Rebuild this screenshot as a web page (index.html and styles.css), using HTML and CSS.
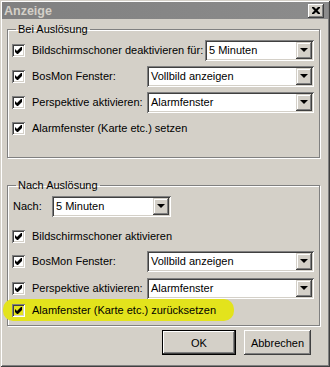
FILE: index.html
```html
<!DOCTYPE html>
<html>

<head>
    <meta http-equiv="content-type" content="text/html; charset=UTF-8">
    <title>Anzeige</title>
    <link rel="stylesheet" href="styles.css">
</head>

<body>
    <div class="window">
        <div class="titlebar">
            <span class="title">Anzeige</span>
            <span class="close">
                <svg width="8" height="7" viewBox="0 0 8 7">
                    <path d="M0 0h2l2 2 2-2h2v1l-2.5 2.5 2.5 2.5v1h-2l-2-2-2 2h-2v-1l2.5-2.5-2.5-2.5z" fill="#000"/>
                </svg>
            </span>
        </div>

        <div class="content">
            <fieldset class="group group-before">
                <legend>Bei Auslösung</legend>
                <div class="row">
                    <span class="box"></span>
                    <span class="caption">Bildschirmschoner deaktivieren für:</span>
                    <div class="combo combo-short"><span class="value">5 Minuten</span><span class="drop"></span></div>
                </div>
                <div class="row">
                    <span class="box"></span>
                    <span class="caption">BosMon Fenster:</span>
                    <div class="combo combo-wide"><span class="value">Vollbild anzeigen</span><span class="drop"></span></div>
                </div>
                <div class="row">
                    <span class="box"></span>
                    <span class="caption">Perspektive aktivieren:</span>
                    <div class="combo combo-wide"><span class="value">Alarmfenster</span><span class="drop"></span></div>
                </div>
                <div class="row">
                    <span class="box"></span>
                    <span class="caption">Alarmfenster (Karte etc.) setzen</span>
                </div>
            </fieldset>

            <fieldset class="group group-after">
                <legend>Nach Auslösung</legend>
                <div class="row row-nach">
                    <span class="caption">Nach:</span>
                    <div class="combo combo-nach"><span class="value">5 Minuten</span><span class="drop"></span></div>
                </div>
                <div class="row row-saver">
                    <span class="box"></span>
                    <span class="caption">Bildschirmschoner aktivieren</span>
                </div>
                <div class="row row-bosmon">
                    <span class="box"></span>
                    <span class="caption">BosMon Fenster:</span>
                    <div class="combo combo-wide"><span class="value">Vollbild anzeigen</span><span class="drop"></span></div>
                </div>
                <div class="row row-persp">
                    <span class="box"></span>
                    <span class="caption">Perspektive aktivieren:</span>
                    <div class="combo combo-wide"><span class="value">Alarmfenster</span><span class="drop"></span></div>
                </div>
                <div class="row marked">
                    <span class="box"></span>
                    <span class="caption">Alamfenster (Karte etc.) zurücksetzen</span>
                </div>
            </fieldset>

            <div class="buttons">
                <button class="btn btn-default">OK</button>
                <button class="btn btn-cancel">Abbrechen</button>
            </div>
        </div>
    </div>
</body>

</html>
```

FILE: styles.css
```css
body {
    margin: 0;
    font-family: "Liberation Sans", Arial, sans-serif;
    font-size: 11px;
    color: #000;
}

.window {
    width: 330px;
    height: 367px;
    box-sizing: border-box;
    background-color: #d4d0c8;
    box-shadow: inset 1px 1px #d4d0c8, inset -1px -1px #404040, inset 2px 2px #fff, inset -2px -2px #808080;
    padding-top: 2px;
}

.titlebar {
    height: 17px;
    margin: 0 2px;
    background: linear-gradient(to right, #808080, #8c8c8c);
    display: flex;
    align-items: center;
    justify-content: space-between;
}

.title {
    color: #d4d0c8;
    font-weight: bold;
    font-size: 12.5px;
    padding-left: 2px;
}

.close {
    width: 16px;
    height: 14px;
    margin-right: 4px;
    box-sizing: border-box;
    background-color: #d4d0c8;
    box-shadow: inset -1px -1px #404040, inset 1px 1px #fff, inset -2px -2px #808080;
    display: flex;
    align-items: center;
    justify-content: center;
}

.content {
    padding: 3px 10px 0 7px;
}

.group {
    margin: 0;
    padding: 1px 5px 16px 4px;
    border: 1px solid #808080;
    box-shadow: 1px 1px 0 #fff, inset 1px 1px 0 #fff;
}

.group legend {
    padding: 0 2px;
    margin-left: 4px;
    line-height: 14px;
}

.group-after {
    margin-top: 20px;
    padding-bottom: 4px;
}

.row {
    height: 26px;
    display: flex;
    align-items: center;
}

.box {
    flex: none;
    width: 13px;
    height: 13px;
    box-sizing: border-box;
    background-color: #fff;
    box-shadow: inset 1px 1px #808080, inset -1px -1px #fff, inset 2px 2px #404040, inset -2px -2px #d4d0c8;
    margin-right: 7px;
    background-image: url("data:image/svg+xml,%3Csvg xmlns='http://www.w3.org/2000/svg' width='7' height='7'%3E%3Cpath d='M0 2l2 2 4-4h1v3l-4 4h-1l-2-2z' fill='%23000'/%3E%3C/svg%3E");
    background-repeat: no-repeat;
    background-position: 3px 3px;
}

.caption {
    white-space: nowrap;
}

.combo {
    margin-left: auto;
    height: 21px;
    box-sizing: border-box;
    padding: 2px;
    background-color: #fff;
    box-shadow: inset 1px 1px #808080, inset -1px -1px #fff, inset 2px 2px #404040, inset -2px -2px #d4d0c8;
    display: flex;
    align-items: center;
}

.combo .value {
    flex: 1;
    padding-left: 2px;
    white-space: nowrap;
}

.combo .drop {
    width: 16px;
    height: 17px;
    box-sizing: border-box;
    background-color: #d4d0c8;
    box-shadow: inset -1px -1px #404040, inset 1px 1px #d4d0c8, inset -2px -2px #808080, inset 2px 2px #fff;
    display: flex;
    align-items: center;
    justify-content: center;
}

.combo .drop::after {
    content: "";
    border-left: 4px solid transparent;
    border-right: 4px solid transparent;
    border-top: 4px solid #000;
}

.combo-short {
    width: 109px;
}

.combo-wide {
    width: 167px;
}

.row-nach {
    height: 22px;
    margin-top: 2px;
}

.row-nach .caption {
    padding-left: 1px;
    width: 39px;
}

.combo-nach {
    margin-left: 0;
    width: 119px;
}

.row-saver {
    height: 22px;
    margin-top: 8px;
}

.row-bosmon {
    height: 22px;
    margin-top: 3px;
}

.row-persp {
    height: 22px;
    margin-top: 5px;
}

.marked {
    height: 22px;
    width: fit-content;
    margin-left: -9px;
    padding: 0 18px 0 9px;
    border-radius: 10px;
    background-color: #e3e31c;
}

.marked .box {
    background-color: #e3e31c;
}

.buttons {
    display: flex;
    justify-content: flex-end;
    gap: 8px;
    margin-top: 4px;
    padding-right: 9px;
}

.btn {
    height: 25px;
    font-family: inherit;
    font-size: 11px;
    color: #000;
    border: none;
    background-color: #d4d0c8;
    box-shadow: inset -1px -1px #404040, inset 1px 1px #fff, inset -2px -2px #808080, inset 2px 2px #d4d0c8;
}

.btn-default {
    width: 74px;
    box-shadow: inset 0 0 0 1px #000, inset -2px -2px #404040, inset 2px 2px #fff, inset -3px -3px #808080;
}

.btn-cancel {
    width: 67px;
}
```
